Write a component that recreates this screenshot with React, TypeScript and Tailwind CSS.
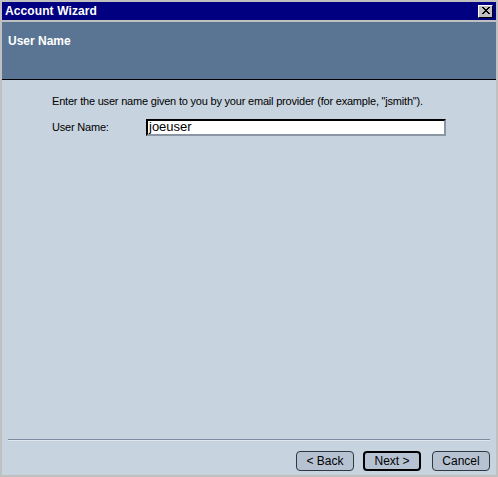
import React from "react";

function Btn({ label, def }: { label: string; def?: boolean }) {
  return (
    <div
      className={`w-[58px] h-[20px] flex items-center justify-center rounded-[4px] bg-[#b6c2d2] text-[12px] text-black ${
        def ? "border-2 border-black" : "border border-[#303840]"
      }`}
    >
      {label}
    </div>
  );
}

export default function App() {
  return (
    <div
      className="w-[498px] h-[477px] bg-[#c0c0c0] p-[2px] flex flex-col"
      style={{ fontFamily: '"Liberation Sans", Arial, sans-serif' }}
    >
      <div className="h-[18px] bg-[#000080] flex items-center justify-between pl-[3px] pr-[3px]">
        <span className="text-white font-bold text-[12px] tracking-[0.1px]">Account Wizard</span>
        <div className="w-[15px] h-[13px] bg-[#c0c0c0] border-t border-l border-white border-r border-b border-r-black border-b-black flex items-center justify-center">
          <svg width="9" height="8" viewBox="0 0 9 8">
            <path d="M1 0 L8 7 M2 0 L9 7 M8 0 L1 7 M9 0 L2 7" stroke="black" strokeWidth="1" fill="none" shapeRendering="crispEdges" />
          </svg>
        </div>
      </div>
      <div className="h-[2px]" />
      <div className="h-[58px] bg-[#5a7593] border-b border-black pl-[6px] pt-[9px] leading-[18px]">
        <span className="text-white font-bold text-[12px]">User Name</span>
      </div>
      <div className="flex-1 bg-[#c7d3df] flex flex-col">
        <div className="flex-1 pl-[50px] pt-[13px] text-[11px] tracking-[-0.2px] text-black">
          <div>Enter the user name given to you by your email provider (for example, "jsmith").</div>
          <div className="flex items-center mt-[9px]">
            <span className="w-[94px]">User Name:</span>
            <div className="w-[300px] h-[17px] bg-white border-2 border-t-black border-l-black border-r-[#8a96a4] border-b-[#8a96a4] flex items-center pl-[1px] text-[13px] tracking-normal">
              joeuser
            </div>
          </div>
        </div>
        <div className="mx-[6px] h-[2px] bg-[#7c8c9e] border-b border-[#dfe6ee]" />
        <div className="flex justify-end pr-[6px] pt-[10px] pb-[4px]">
          <Btn label="< Back" />
          <div className="w-[9px]" />
          <Btn label="Next >" def />
          <div className="w-[11px]" />
          <Btn label="Cancel" />
        </div>
      </div>
    </div>
  );
}
